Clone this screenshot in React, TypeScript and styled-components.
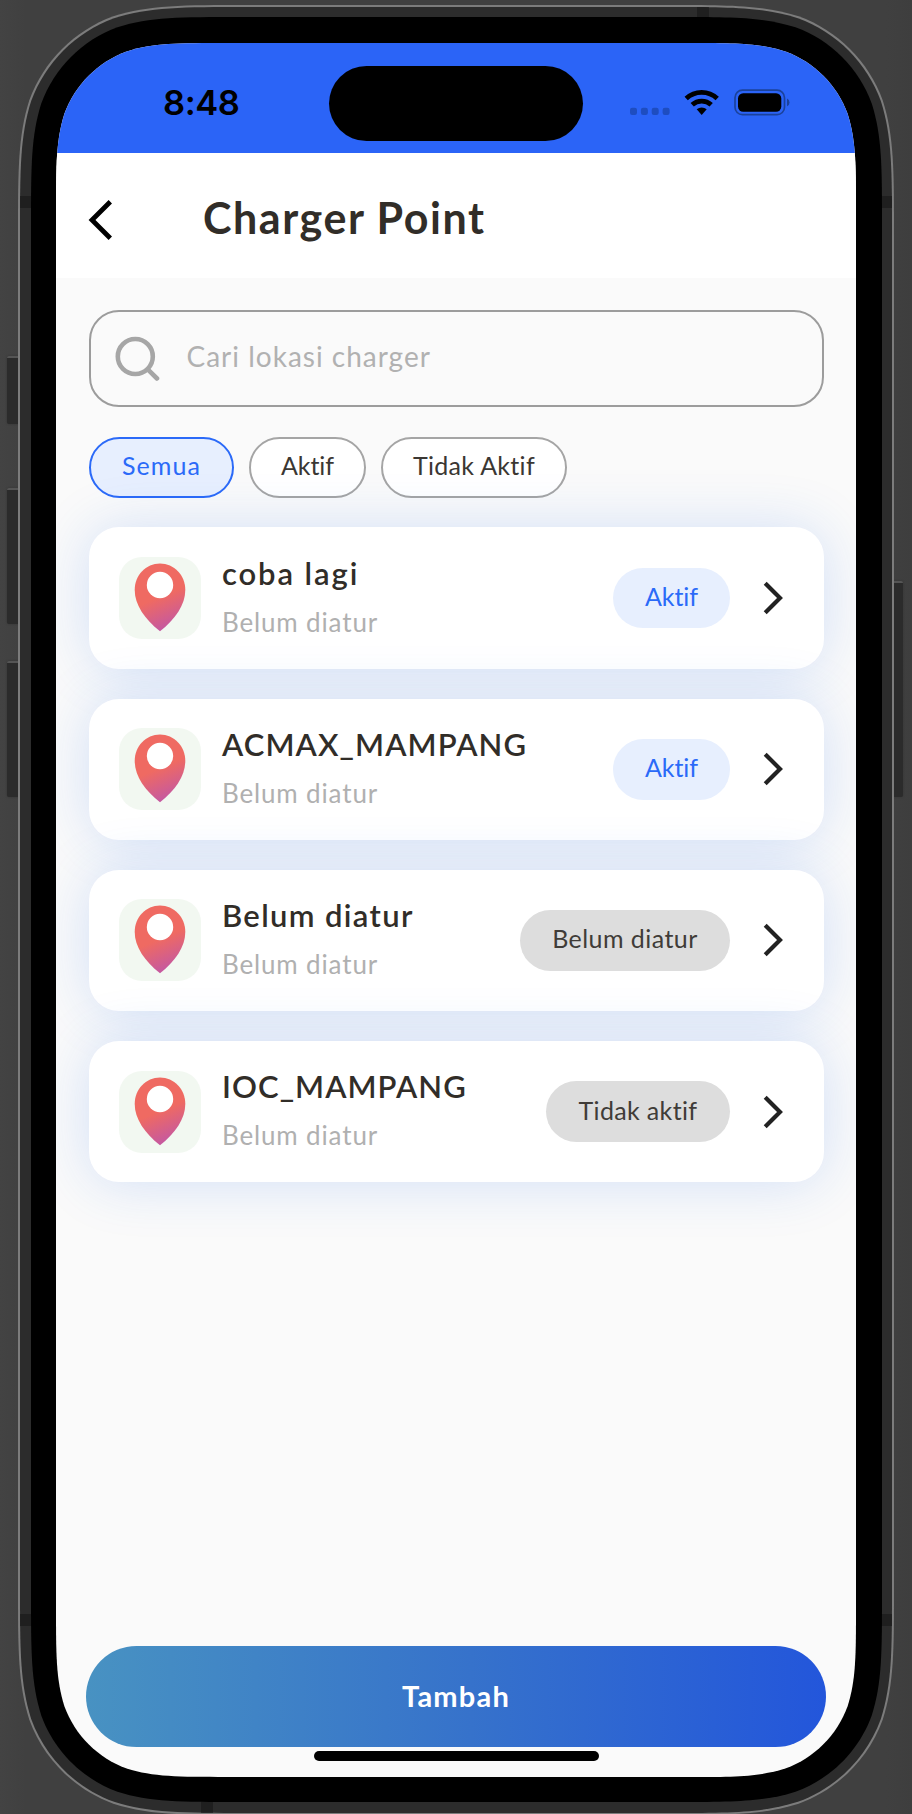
import React from 'react';
import styled, { createGlobalStyle } from 'styled-components';

const GlobalStyle = createGlobalStyle`
  * { box-sizing: border-box; }
  body {
    margin: 0;
    background: #404040;
    font-family: Lato, "Open Sans", sans-serif;
    overflow: hidden;
  }
`;

/* Outline of a rectangle with continuous (smoothed) corners. */
const smoothRect = (w: number, h: number, r: number) => {
  const [a, b, c, f, g, i, j] = [1.52866, 1.08849, 0.86841, 0.63149, 0.07491, 0.37282, 0.16906].map(v => v * r);
  return [
    `M ${a} 0 L ${w - a} 0`,
    `C ${w - b} 0 ${w - c} 0 ${w - f} ${g}`,
    `C ${w - i} ${j} ${w - j} ${i} ${w - g} ${f}`,
    `C ${w} ${c} ${w} ${b} ${w} ${a} L ${w} ${h - a}`,
    `C ${w} ${h - b} ${w} ${h - c} ${w - g} ${h - f}`,
    `C ${w - j} ${h - i} ${w - i} ${h - j} ${w - f} ${h - g}`,
    `C ${w - c} ${h} ${w - b} ${h} ${w - a} ${h} L ${a} ${h}`,
    `C ${b} ${h} ${c} ${h} ${f} ${h - g}`,
    `C ${i} ${h - j} ${j} ${h - i} ${g} ${h - f}`,
    `C 0 ${h - c} 0 ${h - b} 0 ${h - a} L 0 ${a}`,
    `C 0 ${b} 0 ${c} ${g} ${f}`,
    `C ${j} ${i} ${i} ${j} ${f} ${g}`,
    `C ${c} 0 ${b} 0 ${a} 0 Z`,
  ].join(' ');
};

const Stage = styled.div`
  position: relative;
  width: 912px;
  height: 1814px;
  padding: 5px 0 0 18px;
  overflow: hidden;
  background: linear-gradient(90deg, #434343 0, #404040 26px, #404040 886px, #3e3e3e 100%);
`;

const SideKey = styled.div<{ $side: 'left' | 'right'; $top: number; $height: number }>`
  position: absolute;
  ${p => p.$side}: ${p => (p.$side === 'left' ? 7 : 9)}px;
  top: ${p => p.$top}px;
  width: 14px;
  height: ${p => p.$height}px;
  background: #2b2b2b;
  border-top: 2px solid #555;
  border-radius: 2px;
  box-shadow: 0 0 2px #333;
`;

const Rim = styled.div`
  position: relative;
  width: 876px;
  height: 1810px;
  padding: 2px;
  background: #7c7c7c;
  clip-path: path("${smoothRect(876, 1810, 151)}");
`;

const Band = styled.div`
  position: relative;
  width: 872px;
  height: 1806px;
  padding: 10px 10px 11px 11px;
  background: #2c2c2c;
  clip-path: path("${smoothRect(872, 1806, 149)}");
`;

const Antenna = styled.div<{ $x: number; $y: number; $upright?: boolean }>`
  position: absolute;
  left: ${p => p.$x}px;
  top: ${p => p.$y}px;
  width: ${p => (p.$upright ? 12 : 11)}px;
  height: ${p => (p.$upright ? 11 : 12)}px;
  background: #1f1f1f;
`;

const Bezel = styled.div`
  position: relative;
  width: 851px;
  height: 1785px;
  padding: 26px 26px 25px 25px;
  background: #000;
  clip-path: path("${smoothRect(851, 1785, 137)}");
`;

const Screen = styled.div`
  width: 800px;
  height: 1734px;
  display: flex;
  flex-direction: column;
  background: #fafafa;
  clip-path: path("${smoothRect(800, 1734, 112)}");
`;

const StatusBar = styled.div`
  display: flex;
  align-items: flex-start;
  height: 110px;
  background: #2b64f7;
  color: #000;
`;

const Clock = styled.div`
  width: 273px;
  padding: 39px 0 0 107px;
  font: 600 34.5px/42px Inter, sans-serif;
  letter-spacing: -0.4px;
`;

const Island = styled.div`
  width: 254px;
  height: 75px;
  margin-top: 23px;
  border-radius: 38px;
  background: #000;
`;

const StatusIcons = styled.svg`
  width: 164px;
  height: 30px;
  margin: 45px 0 0 45px;
`;

const Header = styled.header`
  display: flex;
  align-items: center;
  height: 125px;
  padding-left: 32px;
  background: #fff;
`;

const BackIcon = styled.svg`
  width: 26px;
  height: 42px;
  margin-top: 9px;
`;

const Title = styled.h1`
  margin: 5px 0 0 89px;
  color: #312d28;
  font-size: 43px;
  line-height: 50px;
  font-weight: 700;
  letter-spacing: 1.55px;
  white-space: nowrap;
`;

const Content = styled.main`
  display: flex;
  flex-direction: column;
  padding: 32px 32px 0 33px;
`;

const SearchField = styled.div`
  display: flex;
  align-items: center;
  height: 97px;
  padding-left: 23px;
  border: 2px solid #9c9c9c;
  border-radius: 30px;
`;

const SearchIcon = styled.svg`
  width: 46px;
  height: 46px;
`;

const Placeholder = styled.span`
  margin: -5px 0 0 26.5px;
  color: #b1b1b1;
  font-size: 28px;
  line-height: 32px;
  letter-spacing: 1px;
`;

const Chips = styled.div`
  display: flex;
  gap: 15px;
  margin-top: 30px;
`;

const Chip = styled.button<{ $active?: boolean; $width: number; $tracking: number }>`
  display: flex;
  align-items: center;
  justify-content: center;
  width: ${p => p.$width}px;
  height: 61px;
  padding: 0 0 5px;
  border: 2px solid ${p => (p.$active ? '#2b6af8' : '#a5a5a5')};
  border-radius: 31px;
  background: ${p => (p.$active ? '#e7effe' : '#fff')};
  color: ${p => (p.$active ? '#2b6af8' : '#3b3733')};
  font: 400 25px/30px Lato, sans-serif;
  letter-spacing: ${p => p.$tracking}px;
  white-space: nowrap;
`;

const List = styled.div`
  display: flex;
  flex-direction: column;
  gap: 29.8px;
  margin-top: 29.4px;
`;

const Card = styled.article`
  display: flex;
  align-items: center;
  height: 141.4px;
  padding: 0 38px 0 29.5px;
  border-radius: 30px;
  background: #fff;
  box-shadow: 0 1px 56px rgba(34, 104, 235, 0.18);
`;

const PinTile = styled.div`
  display: flex;
  width: 82px;
  height: 82px;
  padding: 6px 0 0 15.5px;
  border-radius: 23px;
  background: #f2f8f1;
`;

const Info = styled.div`
  flex: 1;
  align-self: flex-start;
  padding: 27.3px 0 0 21.5px;
  white-space: nowrap;
`;

const Name = styled.div<{ $tracking: number }>`
  color: #312d28;
  font-size: 31px;
  line-height: 36px;
  font-weight: 600;
  letter-spacing: ${p => p.$tracking}px;
`;

const Detail = styled.div`
  margin-top: 15px;
  color: #b0b0b0;
  font-size: 26px;
  line-height: 32px;
  letter-spacing: 0.85px;
`;

const Badge = styled.div<{ $active: boolean; $width: number; $tracking: number }>`
  display: flex;
  align-items: center;
  justify-content: center;
  width: ${p => p.$width}px;
  height: 60.5px;
  padding-bottom: 4px;
  border-radius: 31px;
  background: ${p => (p.$active ? '#e7effe' : '#ddd')};
  color: ${p => (p.$active ? '#2b6af8' : '#403c38')};
  font-size: 25px;
  line-height: 30px;
  letter-spacing: ${p => p.$tracking}px;
  white-space: nowrap;
`;

const ChevronIcon = styled.svg`
  width: 24px;
  height: 36px;
  margin-left: 32px;
`;

const Footer = styled.footer`
  display: flex;
  flex-direction: column;
  align-items: center;
  margin-top: auto;
  padding-bottom: 16px;
`;

const AddButton = styled.button`
  width: 740px;
  height: 101px;
  padding: 0 0 1px;
  border: 0;
  border-radius: 51px;
  background: linear-gradient(90deg, #4892c2, #3672cb 52%, #2356db);
  color: #fff;
  font: 700 29px/34px Lato, sans-serif;
  letter-spacing: 1.2px;
`;

const HomeIndicator = styled.div`
  width: 285px;
  height: 10.5px;
  margin-top: 3.5px;
  border-radius: 6px;
  background: #000;
`;

const Pin = () => (
  <svg width="52" height="69" viewBox="0 0 52 69">
    <defs>
      <linearGradient id="pin" x1="12" y1="12" x2="36" y2="68" gradientUnits="userSpaceOnUse">
        <stop offset="0.42" stopColor="#ef6a62" />
        <stop offset="1" stopColor="#c056a8" />
      </linearGradient>
    </defs>
    <path d="M26 .5C12 .5.7 12 .7 27c0 14.500 10 29.500 25.300 41.200C41.300 56.500 51.300 41.500 51.300 27 51.300 12 40 .5 26 .5Z" fill="url(#pin)" />
    <circle cx="26" cy="22" r="13.2" fill="#fff" />
  </svg>
);

const points = [
  { name: 'coba lagi', nameTracking: 1.9, status: 'Aktif', active: true, width: 117, tracking: -0.1 },
  { name: 'ACMAX_MAMPANG', nameTracking: 1.1, status: 'Aktif', active: true, width: 117, tracking: -0.1 },
  { name: 'Belum diatur', nameTracking: 1.35, status: 'Belum diatur', active: false, width: 210, tracking: 0.45 },
  { name: 'IOC_MAMPANG', nameTracking: 1.05, status: 'Tidak aktif', active: false, width: 184, tracking: 0.35 },
];

export default function App() {
  return (
    <>
      <GlobalStyle />
      <Stage>
        <SideKey $side="left" $top={356} $height={68} />
        <SideKey $side="left" $top={488} $height={136} />
        <SideKey $side="left" $top={661} $height={136} />
        <SideKey $side="right" $top={581} $height={216} />
        <Rim>
          <Band>
            <Antenna $x={0} $y={189} />
            <Antenna $x={862} $y={189} />
            <Antenna $x={0} $y={1607} />
            <Antenna $x={862} $y={1607} />
            <Antenna $x={677} $y={0} $upright />
            <Antenna $x={181} $y={1795} $upright />
            <Bezel>
              <Screen>
                <StatusBar>
                  <Clock>8:48</Clock>
                  <Island />
                  <StatusIcons viewBox="0 0 164 30">
                    <g fill="#1e4dc0">
                      <rect x="2" y="19.700" width="7" height="7.300" rx="2.200" />
                      <rect x="12.900" y="19.700" width="7" height="7.300" rx="2.200" />
                      <rect x="23.700" y="19.700" width="7" height="7.300" rx="2.200" />
                      <rect x="34.600" y="19.700" width="7" height="7.300" rx="2.200" />
                    </g>
                    <g fill="none" stroke="#000" strokeWidth="4.800">
                      <path d="M58.200 10.600a22.500 22.500 0 0 1 31 0" />
                      <path d="M64.200 16.800a14 14 0 0 1 19 0" />
                    </g>
                    <path d="M68.700 21.200a7.800 7.800 0 0 1 10 0L73.700 27Z" fill="#000" />
                    <rect x="107" y="2.200" width="49.500" height="24.500" rx="7.500" fill="none" stroke="#1b429b" strokeWidth="1.700" />
                    <rect x="110" y="5.200" width="43.300" height="18.600" rx="5.200" fill="#000" />
                    <path d="M159 10.500q2.500 1.200 2.500 3.900t-2.500 3.900Z" fill="#1b429b" />
                  </StatusIcons>
                </StatusBar>
                <Header>
                  <BackIcon viewBox="0 0 26 42" fill="none" stroke="#000" strokeWidth="4.800">
                    <path d="M22.300 2.800 4 21l18.300 18.200" />
                  </BackIcon>
                  <Title>Charger Point</Title>
                </Header>
                <Content>
                  <SearchField>
                    <SearchIcon viewBox="0 0 46 46" fill="none" stroke="#a6a6a6" strokeWidth="4.600" strokeLinecap="round">
                      <circle cx="21.300" cy="20.500" r="17.500" />
                      <path d="m34 33.700 9 8.800" />
                    </SearchIcon>
                    <Placeholder>Cari lokasi charger</Placeholder>
                  </SearchField>
                  <Chips>
                    <Chip $active $width={145} $tracking={1.1}>Semua</Chip>
                    <Chip $width={117} $tracking={-0.1}>Aktif</Chip>
                    <Chip $width={186} $tracking={0.3}>Tidak Aktif</Chip>
                  </Chips>
                  <List>
                    {points.map(p => (
                      <Card key={p.name}>
                        <PinTile><Pin /></PinTile>
                        <Info>
                          <Name $tracking={p.nameTracking}>{p.name}</Name>
                          <Detail>Belum diatur</Detail>
                        </Info>
                        <Badge $active={p.active} $width={p.width} $tracking={p.tracking}>{p.status}</Badge>
                        <ChevronIcon viewBox="0 0 24 36" fill="none" stroke="#222" strokeWidth="4.200">
                          <path d="M3.200 3.200 18 18 3.200 32.800" />
                        </ChevronIcon>
                      </Card>
                    ))}
                  </List>
                </Content>
                <Footer>
                  <AddButton>Tambah</AddButton>
                  <HomeIndicator />
                </Footer>
              </Screen>
            </Bezel>
          </Band>
        </Rim>
      </Stage>
    </>
  );
}
